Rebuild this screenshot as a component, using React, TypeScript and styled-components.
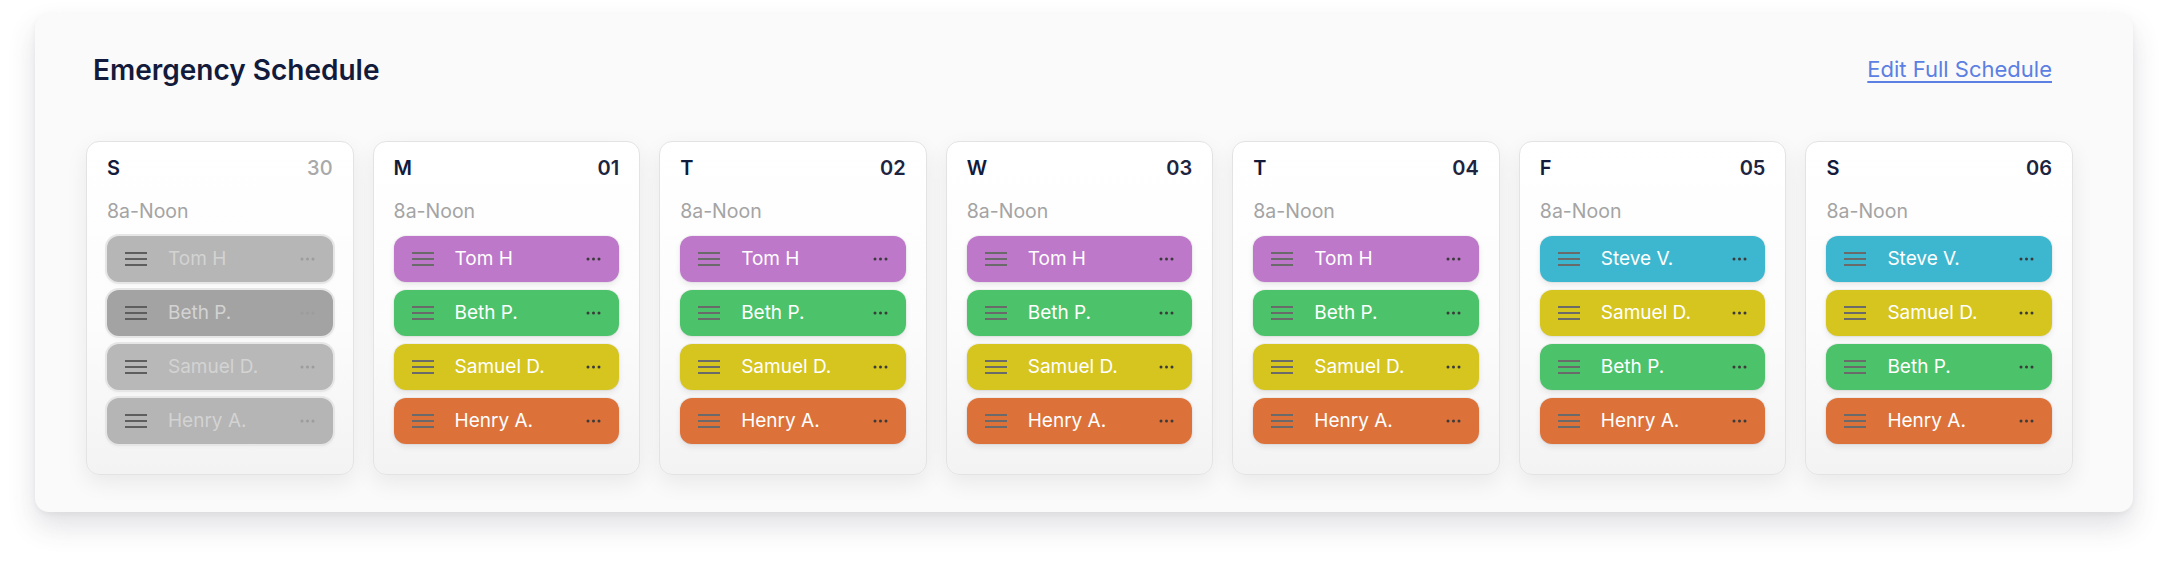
import React from 'react';
import styled, { createGlobalStyle } from 'styled-components';

const GlobalStyle = createGlobalStyle`
  html, body {
    margin: 0;
    padding: 0;
    background: #ffffff;
  }
  body {
    font-family: Inter, 'Noto Sans', 'Liberation Sans', sans-serif;
    -webkit-font-smoothing: antialiased;
  }
`;

const Page = styled.div`
  padding: 14px 33px 50px 35px;
`;

const Card = styled.section`
  background: #fafafa;
  border-radius: 14px;
  padding: 39px 60px 37px 51px;
  box-shadow: 0 14px 28px rgba(60, 64, 90, 0.16), 0 2px 6px rgba(0, 0, 0, 0.05);
`;

const Header = styled.header`
  display: flex;
  align-items: center;
  justify-content: space-between;
  margin: 0 21px 0 7px;
`;

const Title = styled.h1`
  margin: 0;
  font-size: 28px;
  line-height: 34px;
  font-weight: 600;
  color: #121b3b;
`;

const EditLink = styled.a`
  font-size: 22px;
  line-height: 26px;
  color: #5b7fe2;
  text-decoration: underline;
  text-underline-offset: 4px;
  text-decoration-thickness: 2px;
  margin-top: -3px;
  cursor: pointer;
`;

const Week = styled.div`
  display: grid;
  grid-template-columns: repeat(7, 1fr);
  gap: 19px;
  margin-top: 54px;
`;

const DayColumn = styled.div`
  background: linear-gradient(180deg, #ffffff 0%, #fcfcfc 55%, #f3f3f3 100%);
  border: 1px solid #e3e3e3;
  border-radius: 13px;
  padding: 14px 20px 30px;
  box-shadow: 0 8px 22px rgba(0, 0, 0, 0.07);
`;

const DayHead = styled.div`
  display: flex;
  justify-content: space-between;
  font-size: 20px;
  line-height: 24px;
  font-weight: 600;
`;

const DayLetter = styled.span`
  color: #121b3b;
`;

const DayNumber = styled.span<{ $muted?: boolean }>`
  color: ${p => (p.$muted ? '#a9a9a9' : '#1d2440')};
  font-weight: ${p => (p.$muted ? 500 : 600)};
`;

const Shift = styled.div`
  margin-top: 19px;
  font-size: 19.5px;
  line-height: 24px;
  color: #a4a4a4;
`;

const PillList = styled.div`
  display: flex;
  flex-direction: column;
  gap: 8px;
  margin-top: 13px;
`;

const Pill = styled.div<{ $bg: string; $muted?: boolean }>`
  display: flex;
  align-items: center;
  height: 46px;
  padding: 0 18px 0 18px;
  border-radius: 12px;
  background: ${p => p.$bg};
  box-shadow: ${p =>
    p.$muted
      ? '0 0 0 2px #e6e6e6, 0 2px 5px rgba(0, 0, 0, 0.05)'
      : '0 0 0 1px rgba(0, 0, 0, 0.04), 0 3px 6px rgba(0, 0, 0, 0.08)'};
`;

const Name = styled.span<{ $muted?: boolean }>`
  flex: 1;
  margin-left: 21px;
  font-size: 19px;
  line-height: 22px;
  color: ${p => (p.$muted ? '#d3d3d3' : '#ffffff')};
  white-space: nowrap;
`;

const Handle = ({ color }: { color: string }) => (
  <svg width="22" height="16" viewBox="0 0 22 16">
    <rect x="0" y="1" width="22" height="2" fill={color} />
    <rect x="0" y="7" width="22" height="2" fill={color} />
    <rect x="0" y="13" width="22" height="2" fill={color} />
  </svg>
);

const Dots = ({ color }: { color: string }) => (
  <svg width="15" height="4" viewBox="0 0 15 4">
    <circle cx="2" cy="2" r="1.5" fill={color} />
    <circle cx="7.5" cy="2" r="1.5" fill={color} />
    <circle cx="13" cy="2" r="1.5" fill={color} />
  </svg>
);

type Person = { name: string; color: string; grey: string };

const TOM: Person = { name: 'Tom H', color: '#bd78c9', grey: '#b6b6b6' };
const BETH: Person = { name: 'Beth P.', color: '#4cc36a', grey: '#a3a3a3' };
const SAMUEL: Person = { name: 'Samuel D.', color: '#d6c51f', grey: '#b8b8b8' };
const HENRY: Person = { name: 'Henry A.', color: '#dc723a', grey: '#b5b5b5' };
const STEVE: Person = { name: 'Steve V.', color: '#3db7cf', grey: '#b5b5b5' };

const weekdays = [TOM, BETH, SAMUEL, HENRY];
const weekend = [STEVE, SAMUEL, BETH, HENRY];

const days = [
  { letter: 'S', date: '30', muted: true, people: weekdays },
  { letter: 'M', date: '01', people: weekdays },
  { letter: 'T', date: '02', people: weekdays },
  { letter: 'W', date: '03', people: weekdays },
  { letter: 'T', date: '04', people: weekdays },
  { letter: 'F', date: '05', people: weekend },
  { letter: 'S', date: '06', people: weekend },
];

const App: React.FC = () => {
  return (
    <Page>
      <GlobalStyle />
      <Card>
        <Header>
          <Title>Emergency Schedule</Title>
          <EditLink>Edit Full Schedule</EditLink>
        </Header>

        <Week>
          {days.map((day, i) => (
            <DayColumn key={i}>
              <DayHead>
                <DayLetter>{day.letter}</DayLetter>
                <DayNumber $muted={day.muted}>{day.date}</DayNumber>
              </DayHead>
              <Shift>8a-Noon</Shift>
              <PillList>
                {day.people.map(person => (
                  <Pill
                    key={person.name}
                    $bg={day.muted ? person.grey : person.color}
                    $muted={day.muted}
                  >
                    <Handle color={day.muted ? '#5e5e5e' : '#6a6a6a'} />
                    <Name $muted={day.muted}>{person.name}</Name>
                    <Dots color={day.muted ? '#9c9c9c' : '#3a3a3a'} />
                  </Pill>
                ))}
              </PillList>
            </DayColumn>
          ))}
        </Week>
      </Card>
    </Page>
  );
};

export default App;
